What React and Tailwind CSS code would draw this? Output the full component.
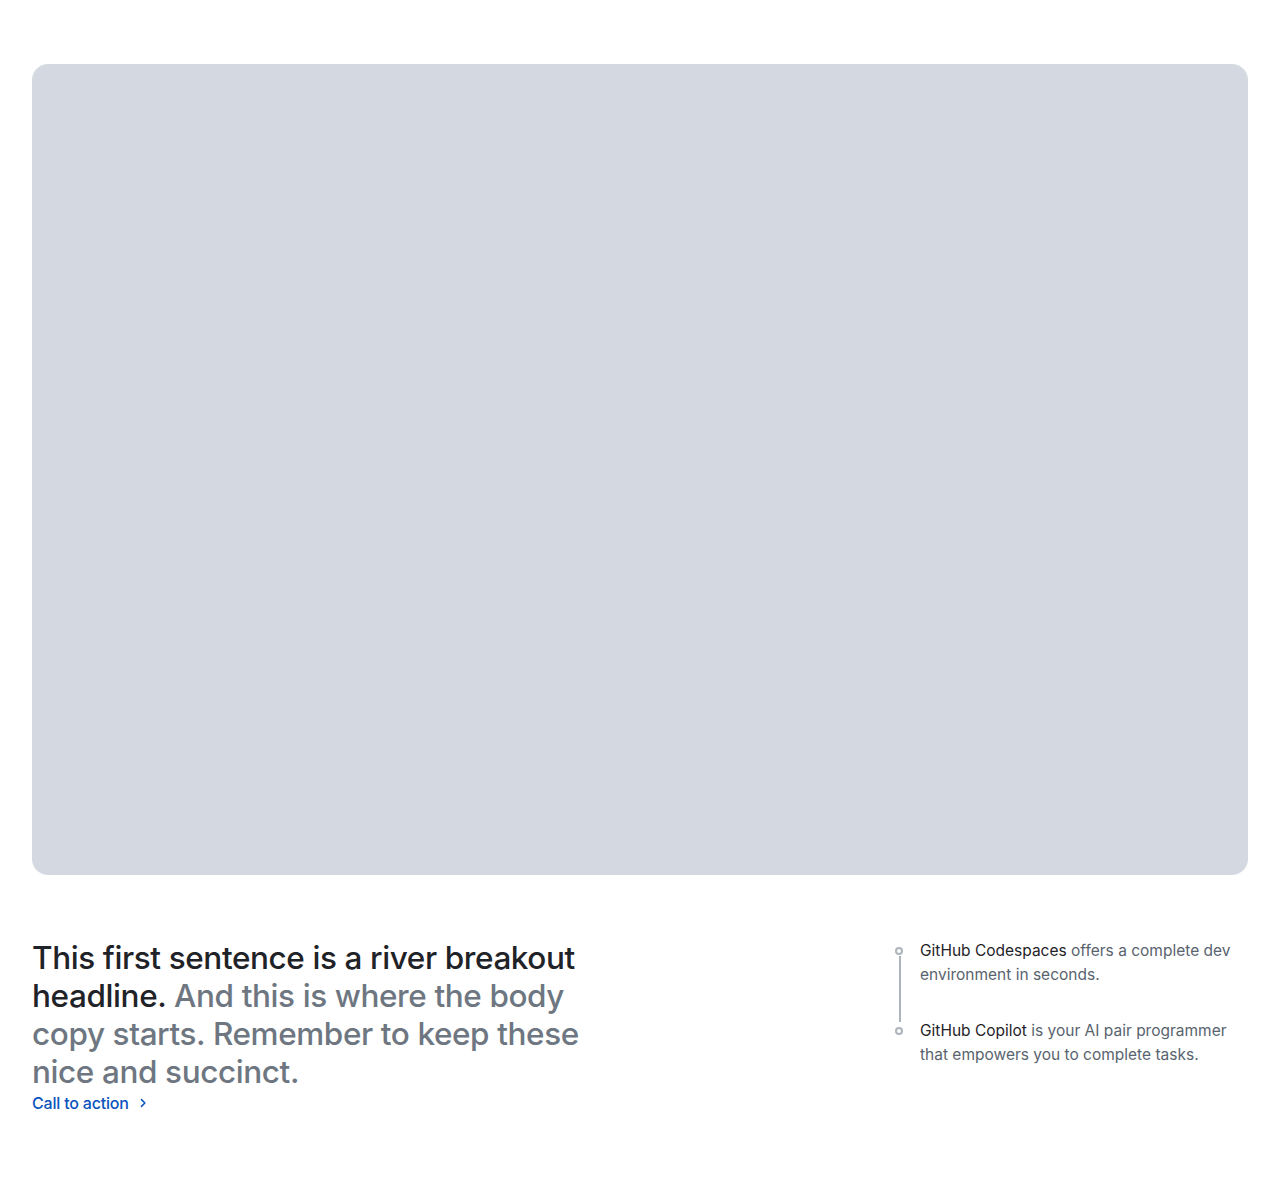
export default function App() {
  return (
    <div className="bg-white min-h-[1180px] px-8 pt-16" style={{ fontFamily: 'Inter, "Noto Sans", sans-serif' }}>
      {/* Visual placeholder */}
      <div className="h-[811px] w-full rounded-2xl bg-[#d4d8e0]" />

      {/* River breakout */}
      <div className="mt-16 flex justify-between">
        <div className="w-[590px]">
          <h2 className="text-[31.5px] leading-[38px] font-medium tracking-[-0.4px] text-[#1f2328]">
            This first sentence is a river breakout headline.{' '}
            <span className="text-[#6e7781]">And this is where the body copy starts. Remember to keep these nice and succinct.</span>
          </h2>
          <a href="#" className="inline-flex items-center gap-2 text-[16px] leading-6 font-medium text-[#0a53be] tracking-[-0.2px]">
            Call to action
            <svg width="12" height="12" viewBox="0 0 16 16" fill="none" stroke="currentColor" strokeWidth="2" strokeLinecap="round" strokeLinejoin="round">
              <path d="M6 3.5 10.5 8 6 12.5" />
            </svg>
          </a>
        </div>

        <div className="w-[353px] relative">
          <div className="absolute left-[4px] top-[17px] h-[66px] w-[2px] bg-[#aeb4bd]" />
          <ul className="flex flex-col gap-8 text-[15.5px] leading-6 text-[#59636e]">
            <li className="flex items-start gap-[17px]">
              <span className="relative mt-[8px] h-[8px] w-[8px] shrink-0 rounded-full border-2 border-[#aeb4bd] bg-white" />
              <p className="w-[326px]"><span className="text-[#1f2328]">GitHub Codespaces</span> offers a complete dev environment in seconds.</p>
            </li>
            <li className="flex items-start gap-[17px]">
              <span className="relative mt-[8px] h-[8px] w-[8px] shrink-0 rounded-full border-2 border-[#aeb4bd] bg-white" />
              <p className="w-[326px]"><span className="text-[#1f2328]">GitHub Copilot</span> is your AI pair programmer that empowers you to complete tasks.</p>
            </li>
          </ul>
        </div>
      </div>
    </div>
  )
}
